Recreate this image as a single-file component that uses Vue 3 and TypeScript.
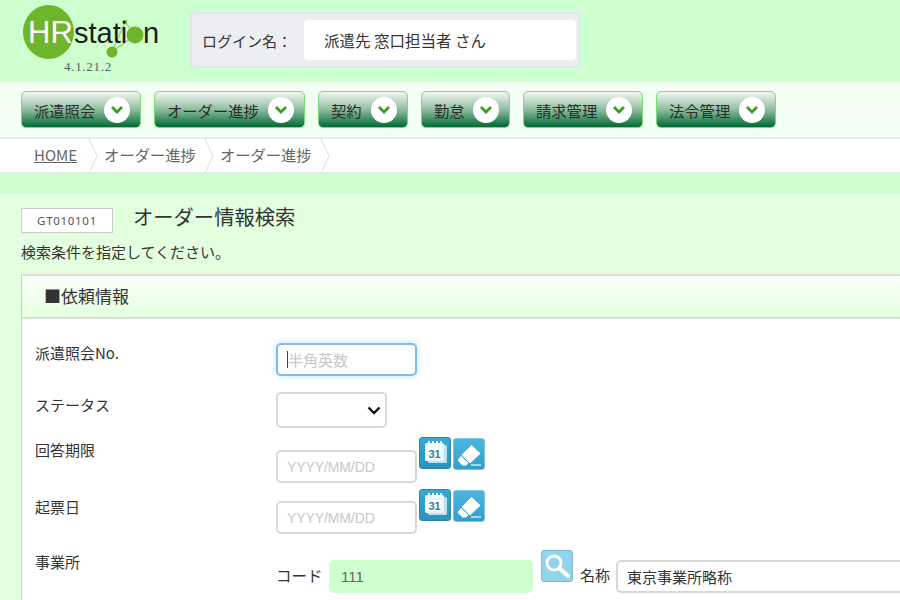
<script setup lang="ts">
interface NavItem { label: string; width: number }
const navItems: NavItem[] = [
  { label: '派遣照会', width: 120 },
  { label: 'オーダー進捗', width: 151 },
  { label: '契約', width: 90 },
  { label: '勤怠', width: 89 },
  { label: '請求管理', width: 120 },
  { label: '法令管理', width: 120 },
]
</script>

<template>
  <div class="page">
    <header class="top">
      <div class="brand">
        <svg class="logo" width="150" height="62" viewBox="0 0 150 62">
          <ellipse cx="25.5" cy="30" rx="25.5" ry="27" fill="#6fb52c" />
          <path d="M89 50L112 33M102 20L89 50M102 20L112 33" stroke="#8fd05a" stroke-width="1.2" fill="none" />
          <circle cx="89" cy="50" r="5.5" fill="#6fb52c" />
          <circle cx="102" cy="20" r="2.2" fill="#6fb52c" />
          <circle cx="112" cy="33" r="8.5" fill="#6fb52c" />
          <text x="5" y="41" class="logo-hr">HR</text>
          <text x="51" y="41" class="logo-st">stati</text>
          <text x="120" y="41" class="logo-st">n</text>
        </svg>
        <div class="version">4.1.21.2</div>
      </div>
      <div class="login">
        <span class="login-label">ログイン名：</span>
        <div class="login-name">派遣先 窓口担当者 さん</div>
      </div>
    </header>

    <nav class="nav">
      <button v-for="item in navItems" :key="item.label" class="nav-btn" :style="{ width: item.width + 'px' }">
        <span>{{ item.label }}</span>
        <span class="nav-circle">
          <svg width="14" height="10" viewBox="0 0 14 10"><path d="M2 2l5 5 5-5" fill="none" stroke="#3f9a22" stroke-width="2.8" /></svg>
        </span>
      </button>
    </nav>

    <div class="crumbs">
      <a class="crumb home">HOME</a>
      <svg class="sep" width="10" height="34" viewBox="0 0 10 34"><path d="M0 0l8 17-8 17" fill="none" stroke="#dedede" /></svg>
      <span class="crumb">オーダー進捗</span>
      <svg class="sep" width="10" height="34" viewBox="0 0 10 34"><path d="M0 0l8 17-8 17" fill="none" stroke="#dedede" /></svg>
      <span class="crumb">オーダー進捗</span>
      <svg class="sep" width="10" height="34" viewBox="0 0 10 34"><path d="M0 0l8 17-8 17" fill="none" stroke="#dedede" /></svg>
    </div>

    <div class="band"></div>

    <main class="content">
      <div class="title-row">
        <div class="screen-id">GT010101</div>
        <h1 class="title">オーダー情報検索</h1>
      </div>
      <p class="hint">検索条件を指定してください。</p>

      <section class="panel">
        <h2 class="panel-head">■依頼情報</h2>
        <div class="panel-body">
          <div class="row row1">
            <div class="label">派遣照会No.</div>
            <div class="field"><div class="input focus"><i class="caret"></i><span class="ph">半角英数</span></div></div>
          </div>
          <div class="row row2">
            <div class="label">ステータス</div>
            <div class="field">
              <div class="select">
                <svg width="14" height="9" viewBox="0 0 14 9"><path d="M1.5 1.5L7 7l5.5-5.5" fill="none" stroke="#111" stroke-width="2.4" /></svg>
              </div>
            </div>
          </div>
          <div class="row row3">
            <div class="label">回答期限</div>
            <div class="field">
              <div class="input date"><span class="ph latin">YYYY/MM/DD</span></div>
              <button class="icon-btn cal">
                <svg width="30" height="30" viewBox="0 0 30 30">
                  <rect x="8" y="7" width="19" height="18" rx="1.5" fill="#bfe0f0" />
                  <rect x="5" y="5" width="19" height="18" rx="1.5" fill="#e8f5fb" />
                  <path d="M9 3v5M13 3v5M17 3v5M21 3v5" stroke="#fff" stroke-width="2" />
                  <rect x="7" y="10" width="15" height="11" fill="#fff" />
                  <text x="14.5" y="20" class="cal-num">31</text>
                </svg>
              </button>
              <button class="icon-btn eraser">
                <svg width="30" height="30" viewBox="0 0 30 30">
                  <path d="M17.5 6.5L26 14.5 16 24 8 16z" fill="#fff" stroke="#fff" stroke-linejoin="round" />
                  <path d="M7 17l7.5 7-2.5 2.5H8.5L4.5 22.5c-.7-.8-.7-1.6 0-2.4z" fill="#fff" />
                  <path d="M17 26h10" stroke="#c9e9f6" stroke-width="1.5" />
                </svg>
              </button>
            </div>
          </div>
          <div class="row row4">
            <div class="label">起票日</div>
            <div class="field">
              <div class="input date"><span class="ph latin">YYYY/MM/DD</span></div>
              <button class="icon-btn cal">
                <svg width="30" height="30" viewBox="0 0 30 30">
                  <rect x="8" y="7" width="19" height="18" rx="1.5" fill="#bfe0f0" />
                  <rect x="5" y="5" width="19" height="18" rx="1.5" fill="#e8f5fb" />
                  <path d="M9 3v5M13 3v5M17 3v5M21 3v5" stroke="#fff" stroke-width="2" />
                  <rect x="7" y="10" width="15" height="11" fill="#fff" />
                  <text x="14.5" y="20" class="cal-num">31</text>
                </svg>
              </button>
              <button class="icon-btn eraser">
                <svg width="30" height="30" viewBox="0 0 30 30">
                  <path d="M17.5 6.5L26 14.5 16 24 8 16z" fill="#fff" stroke="#fff" stroke-linejoin="round" />
                  <path d="M7 17l7.5 7-2.5 2.5H8.5L4.5 22.5c-.7-.8-.7-1.6 0-2.4z" fill="#fff" />
                  <path d="M17 26h10" stroke="#c9e9f6" stroke-width="1.5" />
                </svg>
              </button>
            </div>
          </div>
          <div class="row row5">
            <div class="label">事業所</div>
            <div class="field">
              <span class="inline-label code-label">コード</span>
              <div class="code-input">111</div>
              <button class="icon-btn search">
                <svg width="30" height="30" viewBox="0 0 30 30">
                  <circle cx="12" cy="12" r="7" fill="none" stroke="#fff" stroke-width="3" />
                  <path d="M17.5 17.5L26 25" stroke="#fff" stroke-width="4" stroke-linecap="round" />
                </svg>
              </button>
              <span class="inline-label name-label">名称</span>
              <div class="name-input">東京事業所略称</div>
            </div>
          </div>
        </div>
      </section>
    </main>
  </div>
</template>

<style>
html, body { margin: 0; height: 100%; overflow: hidden; }
</style>

<style scoped>
.page {
  width: 900px;
  height: 600px;
  overflow: hidden;
  background: #e4ffdf;
  color: #333;
  font-family: "Noto Sans CJK JP", "Noto Sans", sans-serif;
}
.top {
  height: 82px;
  background: #ceffce;
  display: flex;
  box-sizing: border-box;
}
.brand { width: 190px; padding: 2px 0 0 23px; box-sizing: border-box; position: relative; }
.logo { display: block; }
.logo-hr { font: 300 31px "Liberation Sans", sans-serif; fill: #fff; }
.logo-st { font: 400 29px "Liberation Sans", sans-serif; fill: #1c1c1c; }
.version {
  position: absolute;
  left: 64px;
  top: 59px;
  font: 13px/16px "Liberation Serif", serif;
  letter-spacing: 0.7px;
  color: #556070;
}
.login {
  width: 390px;
  height: 56px;
  margin-top: 12px;
  box-sizing: border-box;
  background: #eceef2;
  border: 2px solid #e2e4e8;
  border-radius: 4px;
  padding: 5px 2px;
  display: flex;
  align-items: center;
}
.login-label { width: 110px; padding-left: 8px; box-sizing: border-box; font-size: 15px; color: #333; }
.login-name {
  flex: 1;
  height: 40px;
  line-height: 40px;
  background: #fff;
  border-radius: 4px;
  padding-left: 20px;
  font-size: 15.5px;
  color: #333;
}
.nav {
  height: 57px;
  box-sizing: border-box;
  background: #f3fff3;
  border-bottom: 2px solid #e5f3e5;
  padding: 9px 0 0 21px;
  display: flex;
  gap: 13px;
  align-items: flex-start;
}
.nav-btn {
  height: 37px;
  padding: 0 10px 0 12px;
  box-sizing: border-box;
  display: flex;
  align-items: center;
  justify-content: space-between;
  border: 1.5px solid #7cdb7c;
  border-radius: 5px;
  background: linear-gradient(#f4f6f4, #8fbd9e 50%, #006a35);
  font: 15.3px "Noto Sans CJK JP", sans-serif;
  color: #2b2b2b;
}
.nav-circle {
  width: 26px;
  height: 26px;
  border-radius: 50%;
  background: #fff;
  display: flex;
  align-items: center;
  justify-content: center;
}
.crumbs {
  height: 34px;
  box-sizing: border-box;
  background: #fff;
  border-bottom: 1px solid #e8e8e8;
  padding-left: 34px;
  display: flex;
  align-items: center;
  font-size: 15.3px;
  color: #666;
}
.crumb { line-height: 31px; padding-bottom: 2px; }
.home { text-decoration: underline; margin-right: 12px; font-size: 15px; }
.sep { margin-right: 5px; }
.sep + .crumb { margin-right: 9px; }
.band { height: 20px; background: #ceffce; }
.content { padding: 15px 0 0 21px; }
.title-row { display: flex; align-items: center; }
.screen-id {
  width: 92px;
  height: 25px;
  line-height: 23px;
  box-sizing: border-box;
  background: #fff;
  border: 1px solid #ccc;
  text-align: center;
  font: 11.5px/23px "Noto Sans", sans-serif;
  letter-spacing: 0.7px;
  color: #555;
}
.title { margin: -8px 0 0 20px; font-size: 20.3px; line-height: 29px; font-weight: 400; color: #333; }
.hint { margin: 7px 0 0; font-size: 15px; line-height: 24px; color: #333; }
.panel {
  width: 1000px;
  min-height: 340px;
  margin-top: 10px;
  background: #fff;
  border-left: 1px solid #ccc;
  border-top: 2px solid #ddd;
  box-sizing: border-box;
}
.panel-head {
  margin: 0;
  height: 43px;
  box-sizing: border-box;
  padding-left: 22px;
  background: linear-gradient(#fbfffb, #e4ffdf);
  border-bottom: 2px solid #ddd;
  font-size: 17px;
  line-height: 39px;
  font-weight: 400;
  color: #333;
}
.panel-body { padding: 23px 0 0 13px; }
.row { display: flex; align-items: flex-start; }
.label { width: 241px; font-size: 15px; line-height: 22px; color: #333; flex: none; }
.field { display: flex; align-items: flex-start; }
.input {
  width: 141px;
  height: 33px;
  box-sizing: border-box;
  background: #fff;
  border: 2px solid #d8d8d8;
  border-radius: 5px;
  display: flex;
  align-items: center;
  padding-left: 9px;
  font-size: 15px;
  position: relative;
}
.focus { border-color: #7dbcf0; box-shadow: 0 0 6px #bfe0fa; }
.caret { width: 1px; height: 17px; background: #444; flex: none; }
.ph { color: #c8c8c8; }
.latin { font-family: "Liberation Sans", sans-serif; font-size: 14px; letter-spacing: -0.1px; }
.select {
  width: 111px;
  height: 36px;
  box-sizing: border-box;
  background: #fff;
  border: 2px solid #d8d8d8;
  border-radius: 5px;
  display: flex;
  align-items: center;
  justify-content: flex-end;
  padding-right: 4px;
}
.icon-btn {
  width: 32px;
  height: 32px;
  padding: 0;
  box-sizing: border-box;
  border-radius: 3px;
  display: flex;
  align-items: center;
  justify-content: center;
}
.cal { margin-left: 2px; background: linear-gradient(#3aa6d3, #2a93c0); border: 1px solid #2b87ad; }
.eraser { margin: 1px 0 0 2px; background: linear-gradient(#4cb6df, #329fca); border: 1px solid #7cc3dd; }
.cal-num { font: 700 11px "Liberation Sans", sans-serif; fill: #2a80ab; text-anchor: middle; }
.search { background: #92d3ed; border: 1px solid #7fbcd6; margin: 0 7px 0 8px; }
.row1 { height: 50px; }
.row1 .field { margin-top: 1px; }
.row2 { height: 45px; }
.row2 .label { margin-top: 2px; }
.row3 { height: 52px; }
.row3 .label { margin-top: 2px; }
.row3 .input { margin-top: 13px; }
.row4 { height: 61px; }
.row4 .label { margin-top: 7px; }
.row4 .input { margin-top: 12px; }
.row5 .label { margin-top: 1px; }
.inline-label { font-size: 15.5px; line-height: 22px; color: #333; margin-top: 14px; }
.code-label { width: 53px; }
.name-label { width: 36px; font-size: 15px; }
.code-input {
  width: 204px;
  height: 33px;
  margin-top: 10px;
  box-sizing: border-box;
  background: #ceffce;
  border-radius: 5px;
  padding-left: 12px;
  font: 15px/33px "Liberation Sans", sans-serif;
  color: #666;
}
.name-input {
  width: 320px;
  height: 33px;
  margin-top: 10px;
  box-sizing: border-box;
  background: #fff;
  border: 2px solid #d8d8d8;
  border-radius: 5px;
  padding-left: 9px;
  font-size: 15px;
  line-height: 29px;
  color: #333;
}
</style>
